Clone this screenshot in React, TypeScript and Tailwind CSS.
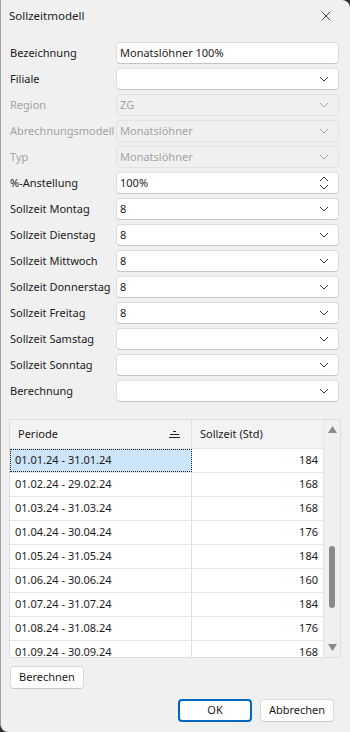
import { X } from "lucide-react";

const font = { fontFamily: '"Noto Sans", "Open Sans", sans-serif' };

type Row = {
  label: string;
  value?: string;
  kind: "text" | "select" | "spin";
  disabled?: boolean;
};

const rows: Row[] = [
  { label: "Bezeichnung", value: "Monatslöhner 100%", kind: "text" },
  { label: "Filiale", kind: "select" },
  { label: "Region", value: "ZG", kind: "select", disabled: true },
  { label: "Abrechnungsmodell", value: "Monatslöhner", kind: "select", disabled: true },
  { label: "Typ", value: "Monatslöhner", kind: "select", disabled: true },
  { label: "%-Anstellung", value: "100%", kind: "spin" },
  { label: "Sollzeit Montag", value: "8", kind: "select" },
  { label: "Sollzeit Dienstag", value: "8", kind: "select" },
  { label: "Sollzeit Mittwoch", value: "8", kind: "select" },
  { label: "Sollzeit Donnerstag", value: "8", kind: "select" },
  { label: "Sollzeit Freitag", value: "8", kind: "select" },
  { label: "Sollzeit Samstag", kind: "select" },
  { label: "Sollzeit Sonntag", kind: "select" },
  { label: "Berechnung", kind: "select" },
];

const perioden = [
  ["01.01.24 - 31.01.24", "184"],
  ["01.02.24 - 29.02.24", "168"],
  ["01.03.24 - 31.03.24", "168"],
  ["01.04.24 - 30.04.24", "176"],
  ["01.05.24 - 31.05.24", "184"],
  ["01.06.24 - 30.06.24", "160"],
  ["01.07.24 - 31.07.24", "184"],
  ["01.08.24 - 31.08.24", "176"],
  ["01.09.24 - 30.09.24", "168"],
];

const Chevron = ({ up = false }: { up?: boolean }) => (
  <svg width="10" height="6" viewBox="0 0 10 6" className="text-[#333]">
    <path
      d={up ? "M1 5 L5 1 L9 5" : "M1 1 L5 5 L9 1"}
      fill="none"
      stroke="currentColor"
      strokeWidth="1"
    />
  </svg>
);

const Field = ({ row }: { row: Row }) => {
  const box = row.disabled
    ? "bg-[#f0f0f0] border-[#e2e2e2] text-[#a3a3a3]"
    : "bg-white border-[#dcdcdc] border-b-[#c4c4c4] text-[#1b1b1b]";
  return (
    <div
      className={`flex h-[22px] items-center justify-between rounded-[4px] border pl-[3px] pr-[9px] text-[11px] ${box}`}
    >
      <span>{row.value ?? ""}</span>
      {row.kind === "select" && (
        <span className={row.disabled ? "opacity-40" : ""}>
          <Chevron />
        </span>
      )}
      {row.kind === "spin" && (
        <span className="flex flex-col gap-[2px]">
          <Chevron up />
          <Chevron />
        </span>
      )}
    </div>
  );
};

const SortIcon = () => (
  <svg width="11" height="9" viewBox="0 0 11 9" className="text-[#222]">
    <path d="M4 1.5 H7 M1 4.5 H10 M0 7.5 H11" stroke="currentColor" strokeWidth="1" />
  </svg>
);

export default function App() {
  return (
    <div className="h-[732px] w-[350px] bg-[#2b2b2b]" style={font}>
      <div className="flex h-full flex-col rounded-tr-[8px] rounded-bl-[8px] border-l border-[#a0a0a0] bg-[#f0f0f0] text-[#1b1b1b]">
        <div className="flex h-[32px] items-center justify-between pl-[8px] pr-[16px]">
          <span className="text-[11.5px]">Sollzeitmodell</span>
          <X size={16} strokeWidth={1.3} className="text-[#222]" />
        </div>

        <div className="mt-[10px] grid grid-cols-[106px_223px] gap-y-[4px] pl-[9px]">
          {rows.map((r) => (
            <div key={r.label} className="contents">
              <div
                className={`flex h-[22px] items-center text-[11px] whitespace-nowrap ${
                  r.disabled ? "text-[#a3a3a3]" : "text-[#1b1b1b]"
                }`}
              >
                {r.label}
              </div>
              <Field row={r} />
            </div>
          ))}
        </div>

        <div className="mt-[17px] ml-[8px] flex h-[239px] w-[332px] overflow-hidden border border-[#dedede] bg-[#f0f0f0]">
          <div className="flex w-[313px] flex-col bg-white">
            <div className="flex h-[29px] shrink-0 border-b border-[#e5e5e5] bg-[#f3f3f3] text-[11px]">
              <div className="flex w-[182px] items-center justify-between border-r border-[#e0e0e0] pl-[8px] pr-[11px]">
                <span>Periode</span>
                <SortIcon />
              </div>
              <div className="flex items-center pl-[8px]">Sollzeit (Std)</div>
            </div>
            {perioden.map(([p, h], i) => (
              <div key={p} className="flex h-[24px] shrink-0 border-b border-[#e5e5e5] text-[11px]">
                <div
                  className={
                    i === 0
                      ? "flex w-[182px] items-center border border-dotted border-[#222] bg-[#cce4f7] pl-[4px]"
                      : "flex w-[182px] items-center border-r border-[#e0e0e0] pl-[5px]"
                  }
                >
                  {p}
                </div>
                <div className="flex flex-1 items-center justify-end pr-[5px]">{h}</div>
              </div>
            ))}
          </div>
          <div className="relative flex flex-1 flex-col items-center justify-between border-l border-[#e5e5e5] py-[6px]">
            <svg width="9" height="7" viewBox="0 0 9 7">
              <path d="M4.5 0 L9 7 H0 Z" fill="#8a8a8a" />
            </svg>
            <div className="absolute top-[126px] h-[62px] w-[6px] rounded-full bg-[#8a8a8a]" />
            <svg width="9" height="7" viewBox="0 0 9 7">
              <path d="M0 0 H9 L4.5 7 Z" fill="#8a8a8a" />
            </svg>
          </div>
        </div>

        <div className="mt-[5px] pl-[9px]">
          <button className="h-[23px] w-[74px] rounded-[4px] border border-[#dadada] border-b-[#c8c8c8] bg-white text-[11px] text-[#1b1b1b]">
            Berechnen
          </button>
        </div>

        <div className="mt-[10px] flex justify-end gap-[8px] pr-[16px]">
          <button className="h-[23px] w-[74px] rounded-[4px] border-2 border-[#0067c0] bg-white text-[11px] text-[#1b1b1b]">
            OK
          </button>
          <button className="h-[23px] w-[74px] rounded-[4px] border border-[#dadada] border-b-[#c8c8c8] bg-white text-[11px] text-[#1b1b1b]">
            Abbrechen
          </button>
        </div>
      </div>
    </div>
  );
}
